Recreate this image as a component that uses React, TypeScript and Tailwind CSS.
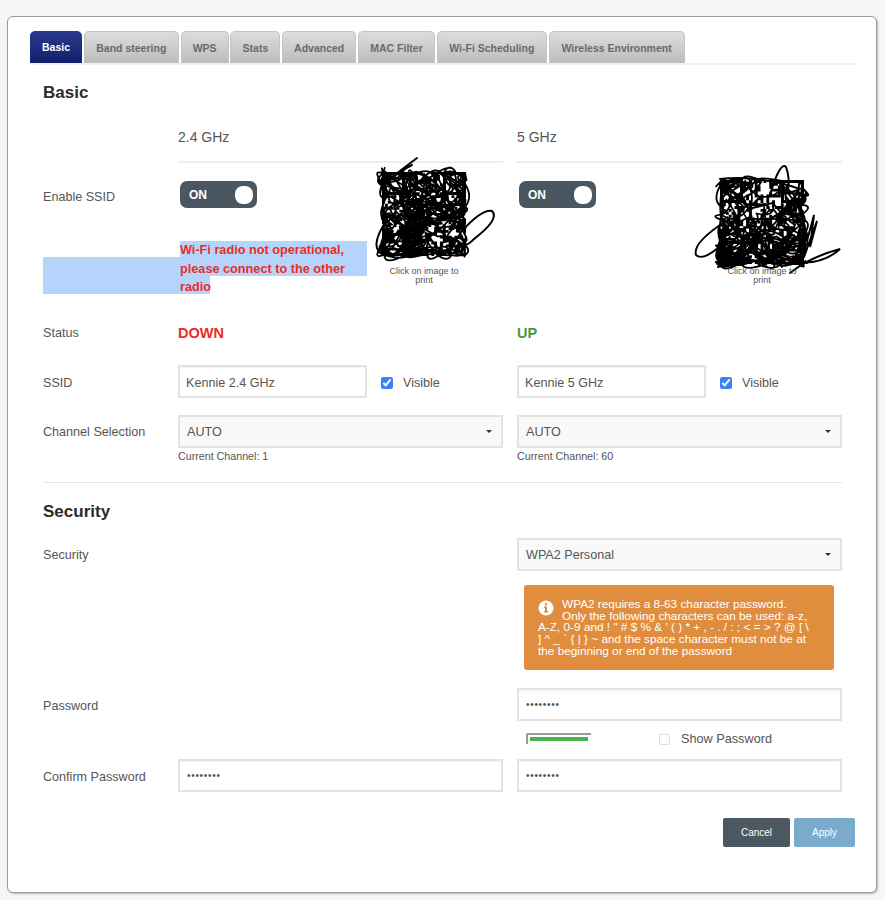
import { useMemo } from "react";

const tabs = ["Band steering", "WPS", "Stats", "Advanced", "MAC Filter", "Wi-Fi Scheduling", "Wireless Environment"];
const tabWidths = [95, 48, 50, 74, 77, 110, 136];

function seeded(seed: number) {
  let s = seed;
  return () => {
    s = (s * 1664525 + 1013904223) % 4294967296;
    return s / 4294967296;
  };
}

interface QrProps {
  seed: number;
  top: number;
  extra: string[];
}

// qr code with the scribble over it, box is 84 wide
function ScribbledQr({ seed, top, extra }: QrProps) {
  const { modules, scribble } = useMemo(() => {
    const rnd = seeded(seed);
    const cell = 84 / 29;
    const mods: string[] = [];
    for (let r = 0; r < 29; r++) {
      for (let c = 0; c < 29; c++) {
        const finder = (r < 8 && c < 8) || (r < 8 && c > 20) || (r > 20 && c < 8);
        if (!finder && rnd() > 0.55) {
          mods.push(`M${c * cell} ${top + r * cell}h${cell}v${cell}h${-cell}z`);
        }
      }
    }
    let px = rnd() * 84;
    let py = top + rnd() * 84;
    let d = `M${px} ${py}`;
    for (let i = 0; i < 340; i++) {
      const nx = Math.min(83, Math.max(1, px + (rnd() - 0.5) * 56));
      const ny = Math.min(top + 83, Math.max(top + 1, py + (rnd() - 0.5) * 56));
      const cx = (px + nx) / 2 + (rnd() - 0.5) * 24;
      const cy = (py + ny) / 2 + (rnd() - 0.5) * 24;
      d += ` Q${cx.toFixed(1)} ${cy.toFixed(1)} ${nx.toFixed(1)} ${ny.toFixed(1)}`;
      px = nx;
      py = ny;
    }
    return { modules: mods.join(""), scribble: d };
  }, [seed, top]);

  const t = top;
  return (
    <svg width="84" height="95" viewBox="0 0 84 95" className="block overflow-visible">
      <path d={modules} fill="#000" />
      <g fill="none" stroke="#000" strokeWidth="3">
        <rect x="1.5" y={t + 1.5} width="20" height="20" />
        <rect x="62.5" y={t + 1.5} width="20" height="20" />
        <rect x="1.5" y={t + 62.5} width="20" height="20" />
      </g>
      <path d={scribble} fill="none" stroke="#000" strokeWidth="1.8" strokeLinejoin="round" />
      {extra.map((p) => (
        <path key={p} d={p} fill="none" stroke="#000" strokeWidth="2" strokeLinecap="round" />
      ))}
    </svg>
  );
}

function TextInput({ value, className = "" }: { value: string; className?: string }) {
  return (
    <input
      readOnly
      value={value}
      className={`h-[33px] border-2 border-[#e3e3e3] bg-white px-[6px] pt-[2px] text-[12.6px] text-[#555] outline-none shadow-[inset_0_1px_1px_rgba(0,0,0,0.05)] ${className}`}
    />
  );
}

function PasswordInput() {
  return (
    <input
      readOnly
      type="password"
      value="12345678"
      className="h-[33px] w-[325px] border-2 border-[#e3e3e3] bg-white px-[7px] text-[10px] tracking-[0.7px] text-[#555] outline-none shadow-[inset_0_1px_1px_rgba(0,0,0,0.05)]"
    />
  );
}

function SelectBox({ value }: { value: string }) {
  return (
    <div className="flex h-[33px] w-[325px] items-center justify-between border-2 border-[#e3e3e3] bg-[#f9f9f9] pl-[7px] pr-[9px] pt-[2px] text-[12.6px] text-[#555]">
      <span>{value}</span>
      <span className="mb-[2px] h-0 w-0 border-x-[3px] border-t-[3px] border-x-transparent border-t-[#333]" />
    </div>
  );
}

function Toggle() {
  return (
    <div className="flex h-[27px] w-[77px] items-center justify-between rounded-[7px] bg-[#4b5760] pl-[9px] pr-[4px]">
      <span className="text-[12px] font-bold text-white">ON</span>
      <span className="h-[18px] w-[18px] rounded-[8px] bg-white" />
    </div>
  );
}

function QrBlock(props: QrProps) {
  return (
    <div className="flex w-[84px] flex-col items-center">
      <ScribbledQr {...props} />
      <p className="mt-[1px] w-[84px] text-center text-[9px] leading-[9px] text-[#555]">Click on image to print</p>
    </div>
  );
}

function Visible() {
  return (
    <label className="flex items-center pt-[4px] text-[12.6px] text-[#555]">
      <input type="checkbox" readOnly checked className="ml-[14px] mr-[10px] h-[12px] w-[12px] accent-[#3b82f6]" />
      Visible
    </label>
  );
}

const rowClass = "grid grid-cols-[121px_325px_325px] gap-x-[14px]";
const labelClass = "text-[12.6px] leading-[20px] text-[#555]";

export default function App() {
  return (
    <div className="h-[900px] w-[885px] overflow-hidden bg-[#f6f6f6] pl-[7px] pt-[16px] [font-family:'Liberation_Sans',sans-serif]">
      <div className="h-[877px] w-[870px] rounded-[6px] border border-[#999] bg-white shadow-[1px_1px_2px_rgba(0,0,0,0.25)]">
        <div className="ml-[22px] mr-[21px] mt-[14px] flex h-[34px] gap-[1.8px] border-b-2 border-[#f0f0f0]">
          <div className="flex h-[32px] w-[52px] items-center justify-center rounded-t-[5px] bg-gradient-to-b from-[#2c3a8e] to-[#121f6c] pt-[2px] text-[10.5px] font-bold text-white">
            Basic
          </div>
          {tabs.map((tab, i) => (
            <div
              key={tab}
              style={{ width: tabWidths[i] }}
              className="flex h-[32px] items-center justify-center rounded-t-[5px] border border-b-0 border-[#c4c4c4] bg-gradient-to-b from-[#dddddd] to-[#bcbcbc] pt-[2px] text-[10.5px] font-bold text-[#6a6a6a]"
            >
              {tab}
            </div>
          ))}
        </div>

        <div className="pl-[35px]">
          <h2 className="mt-[16px] text-[17px] font-bold leading-[24px] text-[#2b2b2b]">Basic</h2>

          <div className={`${rowClass} mt-[22px]`}>
            <div />
            <div className="h-[36px] border-b-2 border-[#eeeeee] text-[14px] leading-[20px] text-[#555]">2.4 GHz</div>
            <div className="h-[36px] border-b-2 border-[#eeeeee] text-[14px] leading-[20px] text-[#555]">5 GHz</div>
          </div>

          <div className={`${rowClass} h-[160px]`}>
            <div>
              <div className={`${labelClass} mt-[24px]`}>Enable SSID</div>
              <div className="mt-[50px] h-[37px] w-[137px] bg-[#b5d4fb]" />
            </div>
            <div className="flex pt-[8px]">
              <div className="w-[204px] pl-[2px] pt-[10px]">
                <Toggle />
                <div className="mt-[33px] text-[12.7px] font-bold leading-[18.5px] text-[#ee2b24]">
                  <div className="h-[35px] w-[187px] bg-[#b5d4fb]">
                    Wi-Fi radio not operational,
                    <br />
                    please connect to the other
                  </div>
                  <div className="h-[18px] w-[30px] bg-[#b5d4fb] pt-[2px]">radio</div>
                </div>
              </div>
              <QrBlock
                seed={7}
                top={1}
                extra={[
                  "M35 -13 Q18 0 2 12 Q22 -2 30 -6",
                  "M40 8 Q55 -8 62 6 Q68 20 74 12",
                  "M80 60 Q100 38 110 40 Q118 48 92 68 Q80 80 84 66",
                  "M4 50 Q-14 78 2 84 Q-4 70 10 62",
                ]}
              />
            </div>
            <div className="flex pt-[8px]">
              <div className="w-[203px] pl-[2px] pt-[10px]">
                <Toggle />
              </div>
              <QrBlock
                seed={23}
                top={9}
                extra={[
                  "M0 8 Q40 4 80 18",
                  "M50 24 Q60 -10 66 -4 Q70 6 68 20",
                  "M6 50 Q-28 72 -24 84 Q-16 92 10 66",
                  "M80 42 L88 66 L94 44 L90 76 L97 50 L84 86",
                  "M-2 96 Q30 70 70 90 Q100 96 120 78 Q90 86 70 102",
                ]}
              />
            </div>
          </div>

          <div className={`${rowClass} h-[22px] items-center`}>
            <div className={`${labelClass} mb-[2px]`}>Status</div>
            <div className="text-[14.5px] font-bold text-[#ee2b24]">DOWN</div>
            <div className="text-[14.5px] font-bold text-[#4a9a3c]">UP</div>
          </div>

          <div className={`${rowClass} mt-[20px] items-center`}>
            <div className={`${labelClass} pt-[3px]`}>SSID</div>
            <div className="flex items-center">
              <TextInput value="Kennie 2.4 GHz" className="w-[189px]" />
              <Visible />
            </div>
            <div className="flex items-center">
              <TextInput value="Kennie 5 GHz" className="w-[189px]" />
              <Visible />
            </div>
          </div>

          <div className={`${rowClass} mt-[17px]`}>
            <div className={`${labelClass} pt-[7px]`}>Channel Selection</div>
            <div>
              <SelectBox value="AUTO" />
              <div className="mt-[1px] text-[10.7px] leading-[14px] text-[#555]">Current Channel: 1</div>
            </div>
            <div>
              <SelectBox value="AUTO" />
              <div className="mt-[1px] text-[10.7px] leading-[14px] text-[#555]">Current Channel: 60</div>
            </div>
          </div>

          <div className="mt-[19px] w-[799px] border-t border-[#e5e5e5]" />
          <h2 className="mt-[17px] text-[17px] font-bold leading-[24px] text-[#2b2b2b]">Security</h2>

          <div className={`${rowClass} mt-[14px]`}>
            <div className={`${labelClass} pt-[7px]`}>Security</div>
            <div />
            <div>
              <SelectBox value="WPA2 Personal" />
              <div className="ml-[7px] mt-[14px] h-[85px] w-[310px] whitespace-nowrap rounded-[3px] bg-[#e08e3d] pl-[14px] pt-[14px] text-[11.8px] leading-[11.7px] text-white">
                <svg width="16" height="16" viewBox="0 0 16 16" className="float-left mr-[8px] mt-[1px]">
                  <circle cx="8" cy="8" r="7.5" fill="#fff" />
                  <rect x="6.9" y="3.2" width="2.2" height="2.2" fill="#e08e3d" />
                  <path d="M6 6.6h3.1v4.4h1v1.4H6V11h1V8H6z" fill="#e08e3d" />
                </svg>
                WPA2 requires a 8-63 character password.
                <br />
                Only the following characters can be used: a-z,
                <br />
                A-Z, 0-9 and ! &quot; # $ % &amp; &#39; ( ) * + , - . / : ; &lt; = &gt; ? @ [ \
                <br />
                ] ^ _ ` {"{"} | {"}"} ~ and the space character must not be at
                <br />
                the beginning or end of the password
              </div>
            </div>
          </div>

          <div className={`${rowClass} mt-[18px]`}>
            <div className={`${labelClass} pt-[8px]`}>Password</div>
            <div />
            <div>
              <PasswordInput />
              <div className="mt-[11px] flex h-[12px] items-center">
                <div className="ml-[9px] h-[11px] w-[65px] rounded-tl-[2px] border-l-2 border-t-2 border-[#9a9a9a] pl-[2px] pt-[2px]">
                  <div className="h-[4px] w-[58px] bg-[#4caf50]" />
                </div>
                <input
                  type="checkbox"
                  readOnly
                  className="ml-[68px] mt-[2px] h-[11px] w-[11px] appearance-none rounded-[2px] border border-[#dddddd] bg-white"
                />
                <span className="ml-[11px] pt-[3px] text-[12.7px] text-[#555]">Show Password</span>
              </div>
            </div>
          </div>

          <div className={`${rowClass} mt-[15px]`}>
            <div className={`${labelClass} pt-[8px]`}>Confirm Password</div>
            <PasswordInput />
            <PasswordInput />
          </div>
        </div>

        <div className="mr-[21px] mt-[26px] flex justify-end gap-[4px]">
          <button className="h-[29px] w-[67px] rounded-[2px] bg-[#4c5861] text-[10px] text-white">Cancel</button>
          <button className="h-[29px] w-[61px] rounded-[2px] bg-[#78abcc] text-[10px] text-white">Apply</button>
        </div>
      </div>
    </div>
  );
}
